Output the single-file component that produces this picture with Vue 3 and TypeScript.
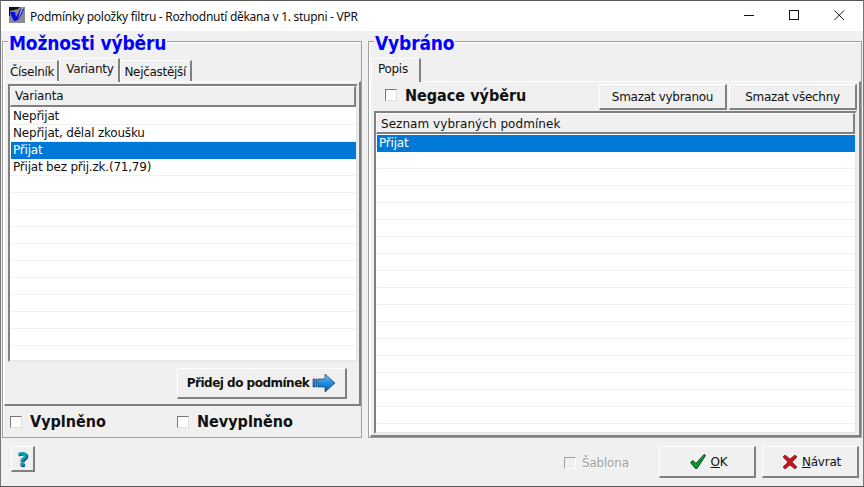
<script setup lang="ts">
const leftRows: string[] = ['Nepřijat', 'Nepřijat, dělal zkoušku', 'Přijat', 'Přijat bez přij.zk.(71,79)', ...Array(11).fill('')]
const rightRows: string[] = ['Přijat', ...Array(17).fill('')]
</script>

<template>
  <div class="window">
    <header class="titlebar">
      <svg class="appicon" width="16" height="16" viewBox="0 0 16 16">
        <rect width="16" height="16" fill="#8c8c8c" />
        <path d="M0 0h11L9 2 5 3 1 4v5H0z" fill="#111" />
        <path d="M1 5h5l1 5 3-5 1-3h4l-2 5-4 6-3 1H5C3 11 2 8 1 5z" fill="#0808e0" />
        <path d="M12 2h2l-2 5-3 5 1-4z" fill="#c8d4ff" opacity=".7" />
      </svg>
      <span class="title">Podmínky položky filtru - Rozhodnutí děkana v 1. stupni - VPR</span>
      <div class="winbtns">
        <svg width="11" height="11" viewBox="0 0 11 11"><path d="M0 5.500h10" stroke="#111" fill="none" /></svg>
        <svg width="11" height="11" viewBox="0 0 11 11"><rect x=".5" y=".5" width="9" height="9" stroke="#111" fill="none" /></svg>
        <svg width="11" height="11" viewBox="0 0 11 11"><path d="M.5.5l9.500 9.500M10 .5l-9.500 9.500" stroke="#111" fill="none" /></svg>
      </div>
    </header>

    <main class="columns">
      <section class="group left">
        <h2 class="legend">Možnosti výběru</h2>
        <div class="tabs">
          <span class="tab">Číselník</span>
          <span class="tab active">Varianty</span>
          <span class="tab last">Nejčastější</span>
        </div>
        <div class="tabpanel lpanel">
          <div class="list leftlist">
            <div class="colhead">Varianta</div>
            <div class="rows">
              <div v-for="(r, i) in leftRows" :key="i" class="row" :class="{ sel: i === 2 }">{{ r }}</div>
            </div>
          </div>
          <div class="addbar">
            <button class="btn add">
              <span>Přidej do podmínek</span>
              <svg width="24" height="20" viewBox="0 0 24 20">
                <defs>
                  <linearGradient id="ar" x1="0" y1="0" x2="0" y2="1">
                    <stop offset="0" stop-color="#7cc4f4" />
                    <stop offset=".5" stop-color="#1f8fe0" />
                    <stop offset="1" stop-color="#0b5ea8" />
                  </linearGradient>
                </defs>
                <path d="M1 6h2v8H1zM4 6h1v8H4zM6 6h7V1l10 9-10 9v-5H6z" fill="url(#ar)" stroke="#0a2a50" stroke-width=".6" />
              </svg>
            </button>
          </div>
        </div>
        <div class="fillrow">
          <label class="chk big fill1"><i class="box" />Vyplněno</label>
          <label class="chk big"><i class="box" />Nevyplněno</label>
        </div>
      </section>

      <section class="group right">
        <h2 class="legend">Vybráno</h2>
        <div class="tabs">
          <span class="tab active popis">Popis</span>
        </div>
        <div class="tabpanel rpanel">
          <div class="actions">
            <label class="chk big negace"><i class="box" />Negace výběru</label>
            <button class="btn del">Smazat vybranou</button>
            <button class="btn del">Smazat všechny</button>
          </div>
          <div class="list rightlist">
            <div class="colhead">Seznam vybraných podmínek</div>
            <div class="rows">
              <div v-for="(r, i) in rightRows" :key="i" class="row" :class="{ sel: i === 0 }">{{ r }}</div>
            </div>
          </div>
        </div>
      </section>
    </main>

    <footer class="footer">
      <button class="btn help"><span class="q">?</span></button>
      <label class="chk disabled"><i class="box" />Šablona</label>
      <button class="btn cmd ok">
        <svg width="16" height="15" viewBox="0 0 16 15"><path d="M.5 8.500l2.500-2 3 3L14 .5l1.500 1L7 14.500H5.500z" fill="#0c9a28" stroke="#04331a" stroke-width=".9" /></svg>
        <span><u>O</u>K</span>
      </button>
      <button class="btn cmd back">
        <svg width="14" height="14" viewBox="0 0 14 14"><path d="M0 2l2-2 5 4 5-4 2 2-5 5 5 5-2 2-5-4-5 4-2-2 5-5z" fill="#c8101a" stroke="#5a0a0a" stroke-width=".6" /></svg>
        <span><u>N</u>ávrat</span>
      </button>
    </footer>
  </div>
</template>

<style scoped>
.window {
  width: 864px;
  height: 487px;
  box-sizing: border-box;
  display: flex;
  flex-direction: column;
  background: #f0f0f0;
  border-top: 1px solid #555;
  border-bottom: 1px solid #555;
  border-left: 1px solid #777;
  border-right: 1px solid #777;
  font-family: "DejaVu Sans", sans-serif;
  font-size: 12px;
  letter-spacing: -0.2px;
  color: #111;
  overflow: hidden;
}
.titlebar {
  height: 30px;
  flex: none;
  background: #fff;
  display: flex;
  align-items: center;
  padding-left: 8px;
  gap: 5px;
}
.appicon { margin-top: -2px; }
.title {
  font-family: "Noto Sans", sans-serif;
  font-size: 12px;
  letter-spacing: -0.28px;
}
.winbtns {
  margin: -2px 0 0 auto;
  display: flex;
  gap: 34px;
  padding-right: 18px;
}
.columns {
  display: flex;
  gap: 6px;
  padding: 10px 1px 0 1px;
  height: 407px;
  box-sizing: border-box;
  flex: none;
}
.group {
  position: relative;
  box-sizing: border-box;
  border: 1px solid #a0a0a0;
  box-shadow: inset 1px 1px 0 #fff;
  display: flex;
  flex-direction: column;
  min-height: 0;
}
.left { width: 360px; flex: none; }
.right { flex: 1; }
.legend {
  position: absolute;
  left: 5px;
  top: -9px;
  margin: 0;
  padding: 0 1px;
  background: #f0f0f0;
  font-family: "DejaVu Sans Condensed", "DejaVu Sans", sans-serif;
  font-size: 19px;
  line-height: 20px;
  font-weight: 700;
  letter-spacing: -0.15px;
  color: #0000ff;
}
.tabs {
  display: flex;
  margin: 15px 0 0 2px;
  height: 24px;
  flex: none;
  align-items: flex-end;
  position: relative;
  z-index: 1;
  letter-spacing: -0.3px;
}
.tab {
  box-sizing: border-box;
  height: 21px;
  line-height: 22px;
  padding: 0 3px 0 4px;
  border-top: 1px solid #fff;
  border-left: 1px solid #fff;
  border-right: 2px solid #808080;
}
.tab.active {
  height: 24px;
  line-height: 21px;
  padding: 0 5px 0 6px;
  background: #f0f0f0;
  margin-bottom: -1px;
}
.tab.last { padding: 0 4px 0 3px; }
.popis { width: 50px; }
.tabpanel {
  flex: 1;
  min-height: 0;
  box-sizing: border-box;
  border-top: 1px solid #fff;
  border-left: 1px solid #fff;
  border-right: 2px solid #808080;
  border-bottom: 2px solid #808080;
  margin: 0 0 0 1px;
  display: flex;
  flex-direction: column;
}
.lpanel { padding: 2px 1px 0 3px; }
.list {
  box-sizing: border-box;
  border-top: 2px solid #808080;
  border-left: 2px solid #808080;
  border-right: 2px solid #e8e8e8;
  border-bottom: 2px solid #e8e8e8;
  background: #fff;
  overflow: hidden;
}
.leftlist { height: 278px; flex: none; }
.colhead {
  box-sizing: border-box;
  height: 21px;
  line-height: 19px;
  padding-left: 4px;
  background: #f0f0f0;
  border-top: 1px solid #fff;
  border-left: 1px solid #fff;
  border-right: 2px solid #808080;
  border-bottom: 2px solid #808080;
}
.rightlist .colhead { line-height: 21px; letter-spacing: 0.05px; }
.rows { padding: 1px 0 0 1px; }
.row {
  box-sizing: border-box;
  height: 17px;
  line-height: 16px;
  padding-left: 2px;
  border-bottom: 1px solid #f0f0f0;
  white-space: nowrap;
}
.row.sel {
  background: #0078d7;
  color: #fff;
  border-bottom-color: #0078d7;
}
.addbar {
  display: flex;
  justify-content: flex-end;
  padding: 6px 11px 0 0;
}
.btn {
  box-sizing: border-box;
  font: inherit;
  letter-spacing: inherit;
  color: inherit;
  background: #f0f0f0;
  border-top: 1px solid #fff;
  border-left: 1px solid #fff;
  border-right: 2px solid #808080;
  border-bottom: 2px solid #808080;
  padding: 0;
  display: flex;
  align-items: center;
  justify-content: center;
}
.add {
  width: 170px;
  height: 31px;
  gap: 3px;
  font-weight: 700;
  letter-spacing: -0.5px;
}
.fillrow {
  height: 31px;
  flex: none;
  display: flex;
  align-items: center;
  padding-left: 7px;
}
.chk {
  display: flex;
  align-items: center;
}
.box {
  box-sizing: border-box;
  width: 12px;
  height: 12px;
  background: #fff;
  border-top: 1px solid #777;
  border-left: 1px solid #777;
  border-right: 1px solid #e0e0e0;
  border-bottom: 1px solid #e0e0e0;
  flex: none;
}
.big {
  font-family: "DejaVu Sans Condensed", "DejaVu Sans", sans-serif;
  font-size: 16px;
  font-weight: 700;
  letter-spacing: 0;
  gap: 8px;
}
.fill1 { width: 167px; }
.rpanel { padding: 2px 2px 0 3px; }
.actions {
  display: flex;
  height: 26px;
  align-items: center;
  gap: 2px;
  flex: none;
}
.negace {
  margin: 0 auto 4px 11px;
}
.del { width: 128px; height: 26px; padding-top: 1px; letter-spacing: -0.28px; }
.rightlist {
  flex: 1;
  min-height: 0;
  margin: 1px 0 1px 0;
}
.footer {
  flex: 1;
  display: flex;
  align-items: flex-start;
  padding: 8px 4px 0 10px;
}
.help {
  width: 24px;
  height: 26px;
}
.q {
  font-family: "DejaVu Sans", sans-serif;
  font-size: 20px;
  font-weight: 700;
  color: #0aa0b8;
  text-shadow: 1px 1px 0 #003a60;
  line-height: 20px;
}
.disabled {
  margin: 10px 0 0 auto;
  gap: 6px;
  color: #a0a0a0;
  text-shadow: 1px 1px 0 #fff;
  width: 95px;
}
.disabled .box {
  background: #f0f0f0;
  border-top-color: #a0a0a0;
  border-left-color: #a0a0a0;
  border-right-color: #fff;
  border-bottom-color: #fff;
}
.cmd {
  width: 97px;
  height: 32px;
}
.ok { gap: 5px; padding-left: 3px; }
.back { gap: 5px; margin-left: 6px; padding-left: 4px; }
</style>

<style>
html, body { margin: 0; overflow: hidden; background: #f0f0f0; }
</style>
